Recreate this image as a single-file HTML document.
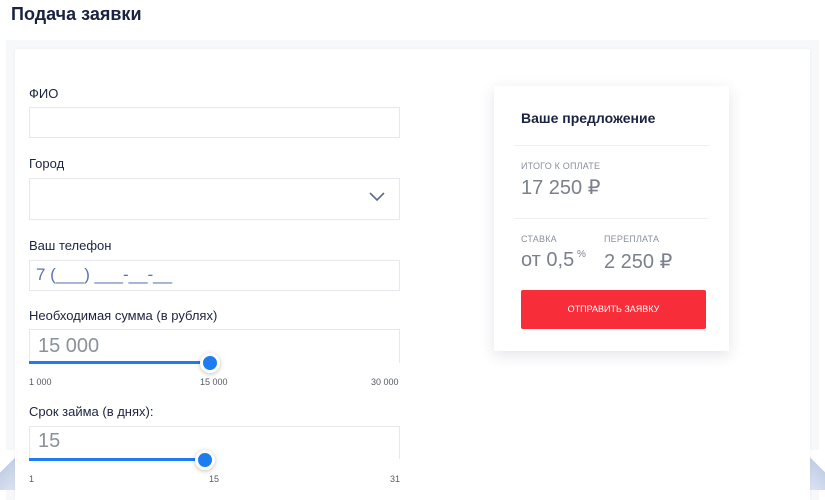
<!DOCTYPE html>
<html><head><meta charset="utf-8"><style>
*{margin:0;padding:0;box-sizing:border-box}
body{width:825px;height:500px;overflow:hidden;background:#fff;font-family:"Liberation Sans",sans-serif;position:relative;color:#1b2340}
.a{position:absolute}
.lbl{position:absolute;left:29px;font-size:13px;color:#1b2340}
.inp{position:absolute;left:29px;width:371px;border:1px solid #e6e8ee;background:#fff}
.val{position:absolute;left:38px;font-size:20px;color:#8a919c;font-weight:300}
.track{position:absolute;left:29px;height:3px;background:#1e7cf2}
.thumb{position:absolute;width:20px;height:20px;border-radius:50%;background:#1e7cf2;border:3px solid #fff;box-shadow:0 1px 5px rgba(0,0,0,.25)}
.sm{position:absolute;font-size:9px;color:#555b66}
.cap{position:absolute;font-size:9px;color:#8a919c;letter-spacing:.2px}
.big{position:absolute;font-size:20px;color:#7a818d}
</style></head><body>
<div class="a" style="left:11px;top:4px;font-size:18px;font-weight:bold;color:#1a2340">Подача заявки</div>
<div class="a" style="left:6px;top:40px;width:813px;height:460px;background:#f7f8fa"></div>
<div class="a" style="left:0;top:450px;width:16px;height:40px;background:linear-gradient(135deg,#fff 0,#fff 40%,#c3cee6 41%,#dde4f2 100%)"></div>
<div class="a" style="left:810px;top:450px;width:15px;height:40px;background:linear-gradient(225deg,#fff 0,#fff 40%,#c3cee6 41%,#dde4f2 100%)"></div>
<div class="a" style="left:15px;top:49px;width:795px;height:451px;background:#fff;box-shadow:0 0 3px rgba(0,0,0,.06)"></div>

<div class="lbl" style="top:86px">ФИО</div>
<div class="inp" style="top:107px;height:31px"></div>
<div class="lbl" style="top:156px">Город</div>
<div class="inp" style="top:178px;height:42px"></div>
<svg class="a" style="left:368px;top:191px" width="18" height="12"><path d="M2 2 L9 9 L16 2" fill="none" stroke="#5a6a8c" stroke-width="1.6"/></svg>
<div class="lbl" style="top:238px">Ваш телефон</div>
<div class="inp" style="top:260px;height:31px"></div>
<div class="a" style="left:36px;top:265px;font-size:17px;color:#5a74b0;font-weight:300">7 (___) ___-__-__</div>

<div class="lbl" style="top:308px">Необходимая сумма (в рублях)</div>
<div class="inp" style="top:329px;height:34px;border-bottom:none"></div>
<div class="val" style="top:335px">15 000</div>
<div class="track" style="top:361px;width:181px"></div>
<div class="thumb" style="left:200px;top:353px"></div>
<div class="sm" style="left:29px;top:377px">1 000</div>
<div class="sm" style="left:200px;top:377px">15 000</div>
<div class="sm" style="left:371px;top:377px">30 000</div>

<div class="lbl" style="top:404px">Срок займа (в днях):</div>
<div class="inp" style="top:426px;height:33px;border-bottom:none"></div>
<div class="val" style="top:430px">15</div>
<div class="track" style="top:458px;width:176px"></div>
<div class="thumb" style="left:195px;top:450px"></div>
<div class="sm" style="left:29px;top:474px">1</div>
<div class="sm" style="left:209px;top:474px">15</div>
<div class="sm" style="left:390px;top:474px">31</div>

<div class="a" style="left:494px;top:86px;width:235px;height:265px;background:#fff;box-shadow:0 4px 14px rgba(40,50,80,.13)"></div>
<div class="a" style="left:521px;top:110px;font-size:14px;font-weight:bold;color:#1a2340">Ваше предложение</div>
<div class="a" style="left:514px;top:145px;width:195px;height:1px;background:#eef0f3"></div>
<div class="cap" style="left:521px;top:161px">ИТОГО К ОПЛАТЕ</div>
<div class="big" style="left:521px;top:175px">17 250 ₽</div>
<div class="a" style="left:514px;top:218px;width:195px;height:1px;background:#eef0f3"></div>
<div class="cap" style="left:521px;top:234px">СТАВКА</div>
<div class="cap" style="left:604px;top:234px">ПЕРЕПЛАТА</div>
<div class="big" style="left:521px;top:249px">от 0,5<span style="font-size:10px;position:relative;top:-9px"> %</span></div>
<div class="big" style="left:604px;top:249px">2 250 ₽</div>
<div class="a" style="left:521px;top:290px;width:185px;height:39px;background:#f72d3a;border-radius:2px;color:#fff;font-size:9px;text-align:center;line-height:39px">ОТПРАВИТЬ ЗАЯВКУ</div>
</body></html>
